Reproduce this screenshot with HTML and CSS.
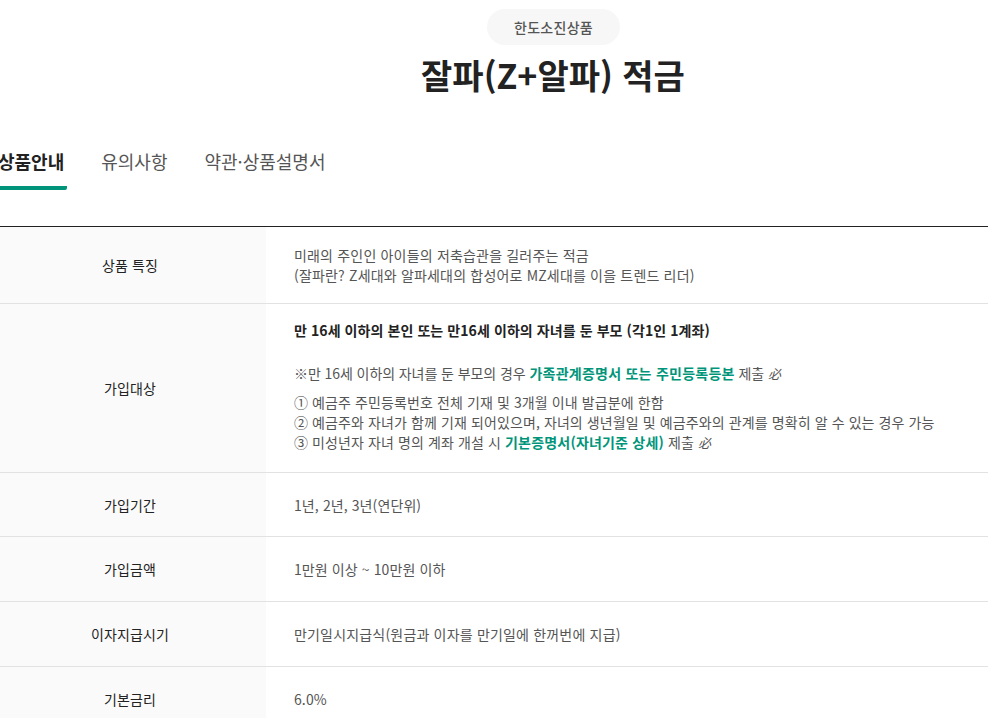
FILE: index.html
```html
<!DOCTYPE html>
<html lang="ko">
<head>
<meta charset="utf-8">
<title>잘파(Z+알파) 적금</title>
<link rel="stylesheet" href="styles.css">
</head>
<body>
<main class="page">
  <header class="head">
    <span class="badge">한도소진상품</span>
    <h1 class="title">잘파(Z+알파) 적금</h1>
  </header>
  <nav class="tabs">
    <a class="tab active">상품안내</a>
    <a class="tab">유의사항</a>
    <a class="tab">약관·상품설명서</a>
  </nav>
  <table class="info">
    <tbody>
      <tr class="r1">
        <th>상품 특징</th>
        <td class="wide">미래의 주인인 아이들의 저축습관을 길러주는 적금<br>(잘파란? Z세대와 알파세대의 합성어로 MZ세대를 이을 트렌드 리더)</td>
      </tr>
      <tr class="r2">
        <th>가입대상</th>
        <td class="target">
          <p class="lead">만 16세 이하의 본인 또는 만16세 이하의 자녀를 둔 부모 (각1인 1계좌)</p>
          <p class="note">※만 16세 이하의 자녀를 둔 부모의 경우 <b class="hl">가족관계증명서 또는 주민등록등본</b> 제출 <i class="seal">必</i></p>
          <ol class="list">
            <li>① 예금주 주민등록번호 전체 기재 및 3개월 이내 발급분에 한함</li>
            <li>② 예금주와 자녀가 함께 기재 되어있으며, 자녀의 생년월일 및 예금주와의 관계를 명확히 알 수 있는 경우 가능</li>
            <li>③ 미성년자 자녀 명의 계좌 개설 시 <b class="hl">기본증명서(자녀기준 상세)</b> 제출 <i class="seal">必</i></li>
          </ol>
        </td>
      </tr>
      <tr class="r4"><th>가입기간</th><td>1년, 2년, 3년(연단위)</td></tr>
      <tr class="r3"><th>가입금액</th><td>1만원 이상 ~ 10만원 이하</td></tr>
      <tr class="r3"><th>이자지급시기</th><td class="wide">만기일시지급식(원금과 이자를 만기일에 한꺼번에 지급)</td></tr>
      <tr class="r3"><th>기본금리</th><td>6.0%</td></tr>
    </tbody>
  </table>
</main>
</body>
</html>
```
FILE: styles.css
```css
* { box-sizing: border-box; }
html, body { margin: 0; padding: 0; height: 100%; overflow: hidden; background: #fff; }
body { font-family: "Noto Sans CJK KR", "Noto Sans", sans-serif; color: #222; }
.page { width: 1200px; margin-left: -47px; padding-top: 9px; }
.head { display: flex; flex-direction: column; align-items: center; }
.badge { display: block; width: 133px; height: 36px; line-height: 36px; text-align: center; border-radius: 18px; background: #f7f7f7; font-size: 14px; font-weight: 500; color: #555; letter-spacing: 0.3px; padding-left: 1px; }
.title { margin: 4px 0 0; font-size: 34px; line-height: 52px; font-weight: 700; color: #222; }
.tabs { display: flex; gap: 31px; margin-top: 45px; height: 49px; margin-left: 42px; }
.tab { display: block; height: 44px; padding: 2px 3px 0; font-size: 18px; line-height: 26px; color: #555; }
.tab.active { font-weight: 700; color: #222; border-bottom: 4px solid #00957a; border-radius: 0 0 2px 2px; }
.info { width: 1159px; margin: 31px 0 0 41px; border-collapse: collapse; table-layout: fixed; border-top: 1px solid #222; font-size: 14px; letter-spacing: 0.1px; }
.info tr { border-bottom: 1px solid #e2e2e2; }
.info th { width: 272px; background: #fafafa; font-weight: 400; color: #222; text-align: center; padding: 0; }
.info td { padding: 0 28px; color: #555; line-height: 20px; }
.info td.target { padding-bottom: 3px; }
.info td.wide { letter-spacing: 0.18px; }
.r1 { height: 77px; }
.r2 { height: 169px; }
.r3 { height: 65px; }
.r4 { height: 64px; }
.lead { margin: 0; font-weight: 700; color: #222; letter-spacing: 0.08px; }
.note { margin: 23px 0 0; letter-spacing: -0.08px; }
.list { margin: 8px 0 0; padding: 0; list-style: none; }
.hl { color: #00957a; font-weight: 700; letter-spacing: 0.2px; }
.note .hl { letter-spacing: 0.25px; }
.seal { font-style: italic; font-size: 13px; }
```
